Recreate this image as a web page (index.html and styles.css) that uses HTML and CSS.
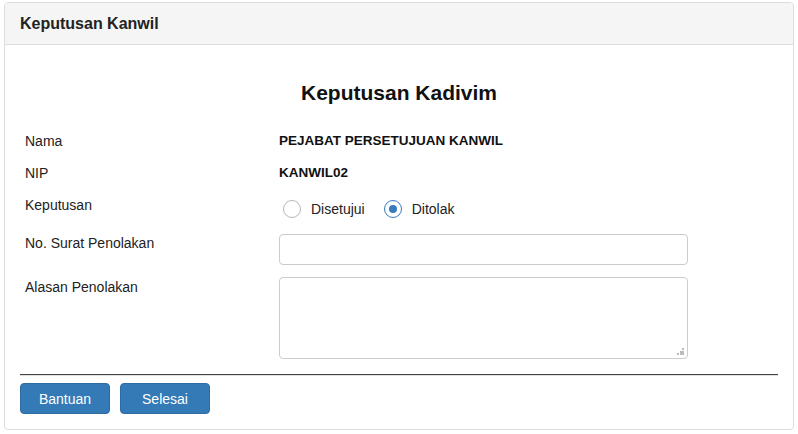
FILE: index.html
```html
<!DOCTYPE html>
<html>
<head>
<meta charset="utf-8">
<link rel="stylesheet" href="styles.css">
</head>
<body>
<div class="panel">
  <div class="panel-heading">Keputusan Kanwil</div>
  <div class="panel-body">
    <h3 class="title">Keputusan Kadivim</h3>
    <div class="row r-nama">
      <div class="lbl">Nama</div>
      <div class="val strong">PEJABAT PERSETUJUAN KANWIL</div>
    </div>
    <div class="row r-nip">
      <div class="lbl">NIP</div>
      <div class="val strong">KANWIL02</div>
    </div>
    <div class="row r-keputusan">
      <div class="lbl">Keputusan</div>
      <div class="val radios">
        <label class="radio"><span class="circle"></span><span class="rtext">Disetujui</span></label>
        <label class="radio checked"><span class="circle"></span><span class="rtext">Ditolak</span></label>
      </div>
    </div>
    <div class="row r-surat">
      <div class="lbl lbl-input">No. Surat Penolakan</div>
      <div class="val"><input class="input" type="text"></div>
    </div>
    <div class="row r-alasan">
      <div class="lbl">Alasan Penolakan</div>
      <div class="val ta-wrap">
        <textarea class="textarea"></textarea>
        <span class="grip"></span>
      </div>
    </div>
    <div class="divider"></div>
    <div class="actions">
      <button class="btn">Bantuan</button>
      <button class="btn">Selesai</button>
    </div>
  </div>
</div>
</body>
</html>
```
FILE: styles.css
```css
* { box-sizing: border-box; }
html, body { margin: 0; padding: 0; background: #fff; }
body {
  padding: 2px 4px 0 4px;
  font-family: "Liberation Sans", Arial, sans-serif;
  font-size: 14px;
  color: #333;
}
.panel {
  width: 790px;
  height: 428px;
  border: 1px solid #ddd;
  border-radius: 4px;
  background: #fff;
}
.panel-heading {
  height: 42px;
  padding: 10px 15px;
  line-height: 21px;
  font-size: 16px;
  font-weight: bold;
  color: #222;
  background: #f5f5f5;
  border-bottom: 1px solid #ddd;
  border-radius: 3px 3px 0 0;
}
.panel-body {
  padding: 15px;
}
.title {
  margin: 20px 0 0 0;
  height: 26px;
  line-height: 26px;
  font-size: 21px;
  font-weight: bold;
  text-align: center;
  color: #111;
}
.row {
  display: flex;
  align-items: flex-start;
}
.lbl {
  width: 259px;
  padding-left: 5px;
  line-height: 20px;
  color: #222;
}
.val { line-height: 20px; }
.strong { font-weight: bold; color: #111; font-size: 13.5px; }
.r-nama { margin-top: 25px; }
.r-nip { margin-top: 12px; }
.r-keputusan { margin-top: 12px; }
.r-surat { margin-top: 16px; }
.r-alasan { margin-top: 12px; }
.lbl-input { line-height: 18px; }
.radios {
  display: flex;
  margin-top: 5px;
  padding-left: 4px;
  gap: 19px;
}
.radio {
  display: flex;
  align-items: center;
  height: 18px;
  color: #222;
}
.circle {
  width: 18px;
  height: 18px;
  border: 1px solid #b8b8b8;
  border-radius: 50%;
  margin-right: 10px;
  position: relative;
  background: #fff;
}
.checked .circle { border-color: #3a7bbf; }
.checked .circle::after {
  content: "";
  position: absolute;
  left: 4px; top: 4px;
  width: 8px; height: 8px;
  border-radius: 50%;
  background: #3a7bbf;
}
.input {
  display: block;
  width: 409px;
  height: 31px;
  border: 1px solid #ccc;
  border-radius: 4px;
  padding: 6px 12px;
  font: inherit;
  outline: none;
}
.ta-wrap { position: relative; }
.textarea {
  display: block;
  width: 409px;
  height: 82px;
  border: 1px solid #ccc;
  border-radius: 4px;
  padding: 6px 12px;
  font: inherit;
  resize: none;
  outline: none;
}
.grip {
  position: absolute;
  right: 4px;
  bottom: 4px;
  width: 7px;
  height: 7px;
  background:
    linear-gradient(#bbb, #bbb) 5px 0 / 2px 2px no-repeat,
    linear-gradient(#bbb, #bbb) 3px 3px / 2px 2px no-repeat,
    linear-gradient(#bbb, #bbb) 5px 3px / 2px 2px no-repeat,
    linear-gradient(#bbb, #bbb) 0 5px / 2px 2px no-repeat,
    linear-gradient(#bbb, #bbb) 3px 5px / 2px 2px no-repeat,
    linear-gradient(#bbb, #bbb) 5px 5px / 2px 2px no-repeat;
}
.divider {
  margin-top: 15px;
  height: 2px;
  border-top: 1px solid #444;
  border-bottom: 1px solid #e0e0e0;
}
.actions {
  display: flex;
  gap: 10px;
  margin-top: 7px;
}
.btn {
  width: 90px;
  height: 31px;
  border: 1px solid #2e6da4;
  border-radius: 4px;
  background: #337ab7;
  color: #fff;
  font-family: "Liberation Sans", Arial, sans-serif;
  font-size: 14px;
  padding: 0;
}
```
